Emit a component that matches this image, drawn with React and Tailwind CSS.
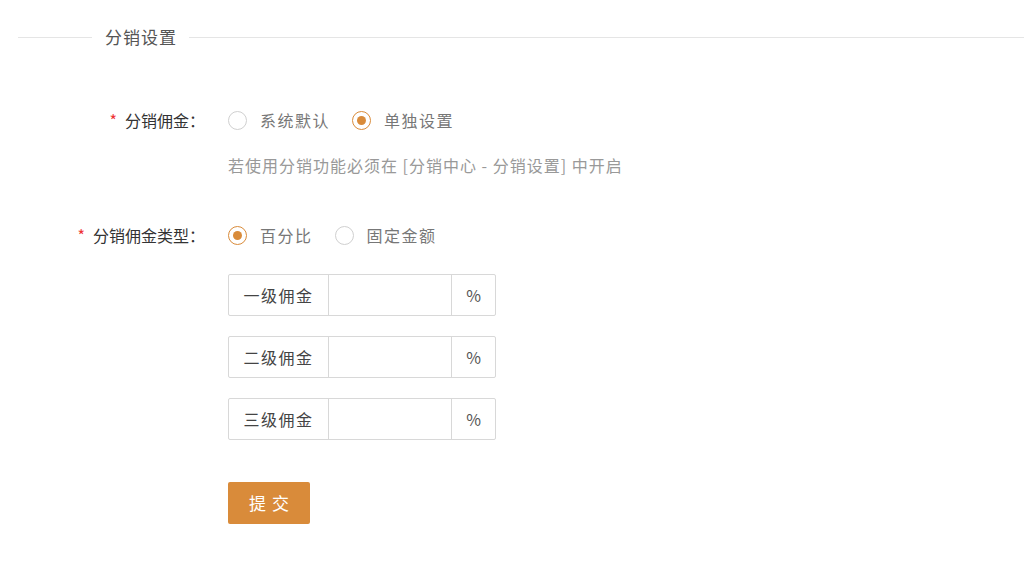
import React, { useState } from 'react'

const font = { fontFamily: '"Microsoft YaHei", "Noto Sans CJK SC", "Liberation Sans", sans-serif' }

function Radio({ checked, label, onClick }) {
  return (
    <label className="flex items-center cursor-pointer" onClick={onClick}>
      <span
        className={`w-[19px] h-[19px] rounded-full border flex items-center justify-center ${
          checked ? 'border-[#d98b3a]' : 'border-[#d0d0d0]'
        }`}
      >
        {checked && <span className="w-[9px] h-[9px] rounded-full bg-[#d98b3a]" />}
      </span>
      <span className="ml-[13px] text-[16px] tracking-[1.5px] text-[#777]">{label}</span>
    </label>
  )
}

function Level({ name }) {
  return (
    <div className="flex h-[42px] w-[268px] border border-[#d8d8d8] rounded-[2px]">
      <div className="w-[100px] flex items-center justify-center text-[16px] tracking-[1.5px] text-[#444] border-r border-[#d8d8d8]">
        {name}
      </div>
      <input className="w-[122px] outline-none px-2 text-[14px]" />
      <div className="flex-1 flex items-center justify-center text-[16px] text-[#555] border-l border-[#d8d8d8]">
        %
      </div>
    </div>
  )
}

export default function App() {
  const [mode, setMode] = useState('custom')
  const [kind, setKind] = useState('percent')

  return (
    <div className="w-[1024px] h-[576px] bg-white overflow-hidden" style={font}>
      {/* legend */}
      <div className="flex items-center pt-[26px]">
        <div className="ml-[18px] w-[74px] h-px bg-[#e5e5e5]" />
        <span className="pl-[13px] pr-[12px] text-[17px] tracking-[1px] text-[#555] leading-[22px]">分销设置</span>
        <div className="flex-1 h-px bg-[#e5e5e5]" />
      </div>

      <div className="mt-[61px]">
        <div className="flex items-center h-[22px]">
          <div className="w-[208px] pr-[3px] text-right text-[16px] text-[#333]">
            <span className="text-[#e33] mr-[8px]">*</span>分销佣金：
          </div>
          <div className="ml-[20px] flex items-center gap-[22px]">
            <Radio checked={mode === 'default'} label="系统默认" onClick={() => setMode('default')} />
            <Radio checked={mode === 'custom'} label="单独设置" onClick={() => setMode('custom')} />
          </div>
        </div>
        <div className="ml-[228px] mt-[23px] text-[16px] leading-[22px] tracking-[1px] text-[#999]">
          若使用分销功能必须在 [分销中心 - 分销设置] 中开启
        </div>

        <div className="flex items-center h-[22px] mt-[48px]">
          <div className="w-[208px] pr-[3px] text-right text-[16px] text-[#333]">
            <span className="text-[#e33] mr-[8px]">*</span>分销佣金类型：
          </div>
          <div className="ml-[20px] flex items-center gap-[22px]">
            <Radio checked={kind === 'percent'} label="百分比" onClick={() => setKind('percent')} />
            <Radio checked={kind === 'fixed'} label="固定金额" onClick={() => setKind('fixed')} />
          </div>
        </div>

        <div className="ml-[228px] mt-[28px] flex flex-col gap-[20px]">
          <Level name="一级佣金" />
          <Level name="二级佣金" />
          <Level name="三级佣金" />
        </div>

        <div className="ml-[228px] mt-[42px]">
          <button className="w-[82px] h-[42px] bg-[#d98b3a] text-white text-[17px] tracking-[6px] pl-[6px] rounded-[2px]">
            提交
          </button>
        </div>
      </div>
    </div>
  )
}
